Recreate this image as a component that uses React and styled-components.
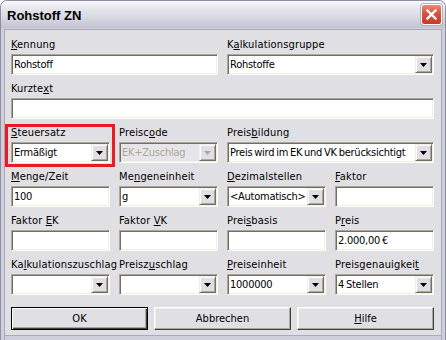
import React from 'react'
import styled, { createGlobalStyle } from 'styled-components'

const GlobalStyle = createGlobalStyle`
  html, body {
    margin: 0;
    padding: 0;
    background: #ffffff;
  }
  body {
    font-family: "DejaVu Sans Condensed", "Liberation Sans", sans-serif;
    font-size: 11px;
    color: #000;
  }
`

// puts an underline under the accelerator letter
function Accel({ text, at }) {
  if (at == null) return text
  return (
    <>
      {text.slice(0, at)}
      <u>{text[at]}</u>
      {text.slice(at + 1)}
    </>
  )
}

function CloseIcon() {
  return (
    <svg width="11" height="11" viewBox="0 0 11 11">
      <path d="M1.5 1.5 L9.5 9.5 M9.5 1.5 L1.5 9.5" stroke="#fff" strokeWidth="2.4" strokeLinecap="square" />
    </svg>
  )
}

function Arrow({ disabled }) {
  return (
    <svg width="7" height="4" viewBox="0 0 7 4">
      <polygon points="0,0 7,0 3.5,4" fill={disabled ? '#aca899' : '#000'} />
    </svg>
  )
}

const fields = [
  { label: 'Kennung', at: 0, kind: 'input', value: 'Rohstoff', span: 2 },
  { label: 'Kalkulationsgruppe', at: 1, kind: 'select', value: 'Rohstoffe', span: 2 },
  { label: 'Kurztext', at: 6, kind: 'input', value: '', span: 4 },
  { label: 'Steuersatz', at: 0, kind: 'select', value: 'Ermäßigt', marked: true },
  { label: 'Preiscode', at: 6, kind: 'select', value: 'EK+Zuschlag', disabled: true },
  { label: 'Preisbildung', at: 5, kind: 'select', value: 'Preis wird im EK und VK berücksichtigt', span: 2 },
  { label: 'Menge/Zeit', at: 0, kind: 'input', value: '100' },
  { label: 'Mengeneinheit', at: 2, kind: 'select', value: 'g' },
  { label: 'Dezimalstellen', at: 0, kind: 'select', value: '<Automatisch>' },
  { label: 'Faktor', at: 0, kind: 'input', value: '' },
  { label: 'Faktor EK', at: 7, kind: 'input', value: '' },
  { label: 'Faktor VK', at: 7, kind: 'input', value: '' },
  { label: 'Preisbasis', at: 4, kind: 'input', value: '' },
  { label: 'Preis', at: 1, kind: 'input', value: '2.000,00 €' },
  { label: 'Kalkulationszuschlag', at: 2, kind: 'select', value: '' },
  { label: 'Preiszuschlag', at: 6, kind: 'select', value: '' },
  { label: 'Preiseinheit', at: 0, kind: 'select', value: '1000000' },
  { label: 'Preisgenauigkeit', at: 15, kind: 'select', value: '4 Stellen' },
]

export default function App() {
  return (
    <>
      <GlobalStyle />
      <Window>
        <TitleBar>
          <Title>Rohstoff ZN</Title>
          <CloseButton>
            <CloseIcon />
          </CloseButton>
        </TitleBar>
        <Body>
          <FieldGrid>
            {fields.map((f) => (
              <Field key={f.label} span={f.span || 1} marked={f.marked}>
                <Label>
                  <Accel text={f.label} at={f.at} />
                </Label>
                <Sunken disabled={f.disabled}>
                  <Value disabled={f.disabled}>{f.value}</Value>
                  {f.kind === 'select' && (
                    <DropButton>
                      <Arrow disabled={f.disabled} />
                    </DropButton>
                  )}
                </Sunken>
              </Field>
            ))}
          </FieldGrid>
          <ButtonRow>
            <PushButton isDefault>OK</PushButton>
            <PushButton>Abbrechen</PushButton>
            <PushButton>
              <Accel text="Hilfe" at={0} />
            </PushButton>
          </ButtonRow>
        </Body>
      </Window>
    </>
  )
}

const Window = styled.div`
  width: 446px;
  height: 340px;
  box-sizing: border-box;
  display: flex;
  flex-direction: column;
  border: 1px solid #8e8ea6;
  border-bottom: none;
  border-radius: 7px 7px 0 0;
  background: #cfcfdc;
  overflow: hidden;
`

const TitleBar = styled.div`
  height: 27px;
  flex: none;
  display: flex;
  align-items: center;
  justify-content: space-between;
  padding: 0 3px 0 6px;
  background: linear-gradient(#fbfbfd 0%, #e7e7ee 25%, #d9d9e3 60%, #c3c3d2 100%);
`

const Title = styled.div`
  font-family: "Liberation Sans", Arial, sans-serif;
  font-weight: bold;
  font-size: 13px;
  color: #000;
  padding-top: 2px;
`

const CloseButton = styled.div`
  width: 21px;
  height: 21px;
  box-sizing: border-box;
  display: flex;
  align-items: center;
  justify-content: center;
  border-radius: 3px;
  border: 1px solid #fff;
  background: linear-gradient(#e98c77 0%, #d8523a 45%, #c73b25 100%);
  box-shadow: 0 0 0 1px #b0b0c0;
`

const Body = styled.div`
  flex: 1;
  margin: 1px 3px 0;
  border: 1px solid #a9a9ba;
  border-bottom: none;
  background: #e0dfe3;
  padding: 8px 7px 0 6px;
  box-shadow: inset 0 -4px 0 #cfcfdc, inset 0 -5px 0 #a9a9ba;
`

const FieldGrid = styled.div`
  display: grid;
  grid-template-columns: repeat(4, 99px);
  column-gap: 9px;
  row-gap: 7px;
`

const Field = styled.div`
  grid-column: span ${(p) => p.span};
  display: flex;
  flex-direction: column;
  gap: 3px;
  position: relative;
  &::before {
    content: '';
    display: ${(p) => (p.marked ? 'block' : 'none')};
    position: absolute;
    top: -2px;
    left: -6px;
    right: -5px;
    bottom: -4px;
    border: 3px solid #e81c24;
  }
`

const Label = styled.div`
  height: 13px;
  line-height: 13px;
  white-space: nowrap;
  letter-spacing: 0.15px;
  u {
    text-decoration-thickness: 1px;
    text-underline-offset: 1px;
  }
`

const Sunken = styled.div`
  height: 21px;
  box-sizing: border-box;
  display: flex;
  align-items: stretch;
  border-top: 1px solid #aca899;
  border-left: 1px solid #aca899;
  border-right: 1px solid #fff;
  border-bottom: 1px solid #fff;
  box-shadow: inset 1px 1px 0 #716f64, inset -1px -1px 0 #f1efe2;
  background: ${(p) => (p.disabled ? '#e6e5e9' : '#fff')};
  padding: 1px;
`

const Value = styled.div`
  flex: 1;
  padding-left: 1px;
  line-height: 17px;
  white-space: nowrap;
  overflow: hidden;
  letter-spacing: -0.25px;
  word-spacing: -1px;
  color: ${(p) => (p.disabled ? '#aca899' : '#000')};
`

const DropButton = styled.div`
  width: 17px;
  flex: none;
  box-sizing: border-box;
  display: flex;
  align-items: center;
  justify-content: center;
  background: #e0dfe3;
  border-top: 1px solid #f1efe2;
  border-left: 1px solid #f1efe2;
  border-right: 1px solid #716f64;
  border-bottom: 1px solid #716f64;
  box-shadow: inset 1px 1px 0 #fff, inset -1px -1px 0 #aca899;
`

const ButtonRow = styled.div`
  display: grid;
  grid-template-columns: repeat(3, 1fr);
  column-gap: 6px;
  margin-top: 12px;
  width: 423px;
`

const PushButton = styled.div`
  height: 23px;
  box-sizing: border-box;
  display: flex;
  align-items: center;
  justify-content: center;
  background: #e0dfe3;
  border: 1px solid ${(p) => (p.isDefault ? '#000' : 'transparent')};
  box-shadow: ${(p) =>
    p.isDefault
      ? 'inset 1px 1px 0 #fff, inset -1px -1px 0 #404040, inset -2px -2px 0 #aca899'
      : 'inset -1px -1px 0 #404040, inset 1px 1px 0 #fff, inset -2px -2px 0 #aca899'};
  ${(p) => !p.isDefault && 'border-top-color: #fff; border-left-color: #fff; border-right-color: #404040; border-bottom-color: #404040; box-shadow: inset -1px -1px 0 #aca899, inset 1px 1px 0 #f1efe2;'}
  u {
    text-underline-offset: 1px;
  }
`
